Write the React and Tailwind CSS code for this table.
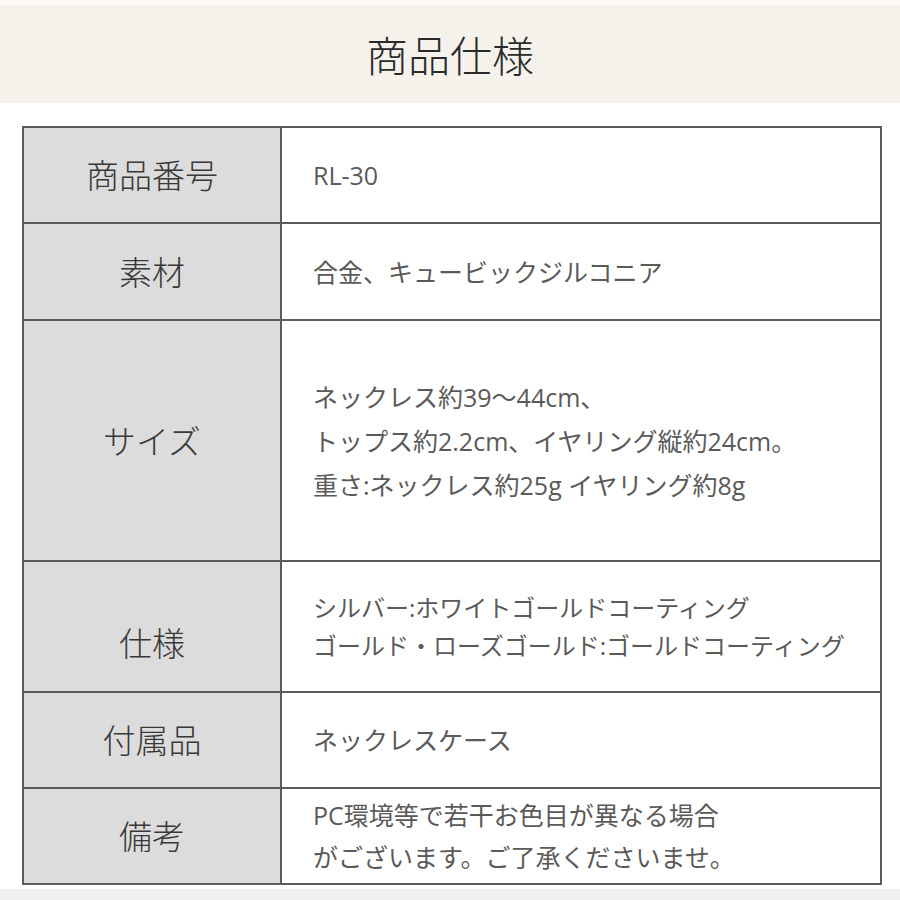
import React from "react";

const rows = [
  { label: "商品番号", h: "h-[96px]", lh: "leading-[40px] text-[25px]", lp: "", lines: ["RL-30"] },
  { label: "素材", h: "h-[97px]", lh: "leading-[40px] text-[25px]", lp: "", lines: ["合金、キュービックジルコニア"] },
  {
    label: "サイズ",
    h: "h-[241px]",
    lh: "leading-[44px] text-[25px]",
    lp: "",
    lines: ["ネックレス約39〜44cm、", "トップス約2.2cm、イヤリング縦約24cm。", "重さ:ネックレス約25g イヤリング約8g"],
  },
  {
    label: "仕様",
    h: "h-[131px]",
    lh: "leading-[38px] text-[24px]",
    lp: "pt-[32px]",
    lines: ["シルバー:ホワイトゴールドコーティング", "ゴールド・ローズゴールド:ゴールドコーティング"],
  },
  { label: "付属品", h: "h-[96px]", lh: "leading-[40px] text-[25px]", lp: "", lines: ["ネックレスケース"] },
  {
    label: "備考",
    h: "h-[96px]",
    lh: "leading-[42px] text-[25px]",
    lp: "",
    lines: ["PC環境等で若干お色目が異なる場合", "がございます。ご了承くださいませ。"],
  },
];

export default function App() {
  return (
    <div
      className="w-[900px] h-[900px] bg-white flex flex-col overflow-hidden"
      style={{ fontFamily: '"Open Sans", "Noto Sans CJK JP", sans-serif' }}
    >
      <div className="h-[5px] bg-[#faf9f6]" />
      <div className="h-[98px] bg-[#f4f2eb] flex items-center justify-center">
        <h1
          className="text-[42px] text-[#2a2a2a] leading-none"
          style={{ fontFamily: '"Noto Sans CJK JP", sans-serif', fontWeight: 300 }}
        >
          商品仕様
        </h1>
      </div>
      <div className="h-[23px]" />
      <div className="ml-[22px] mr-[18px] border-t-2 border-x-2 border-[#5c5c5c]">
        {rows.map((r) => (
          <div key={r.label} className={`flex border-b-2 border-[#5c5c5c] box-border ${r.h}`}>
            <div
              className={`w-[258px] shrink-0 bg-[#dcdcdc] border-r-2 border-[#5c5c5c] flex items-center justify-center ${r.lp}`}
            >
              <span
                className="text-[33px] text-[#383838]"
                style={{ fontFamily: '"Noto Sans CJK JP", sans-serif', fontWeight: 300 }}
              >
                {r.label}
              </span>
            </div>
            <div className={`flex-1 flex flex-col justify-center pl-[31px] text-[#5a5a5a] ${r.lh}`}>
              {r.lines.map((l, i) => (
                <div key={i} className="whitespace-nowrap">
                  {l}
                </div>
              ))}
            </div>
          </div>
        ))}
      </div>
      <div className="h-[4px]" />
      <div className="flex-1 bg-[#efefef]" />
    </div>
  );
}
